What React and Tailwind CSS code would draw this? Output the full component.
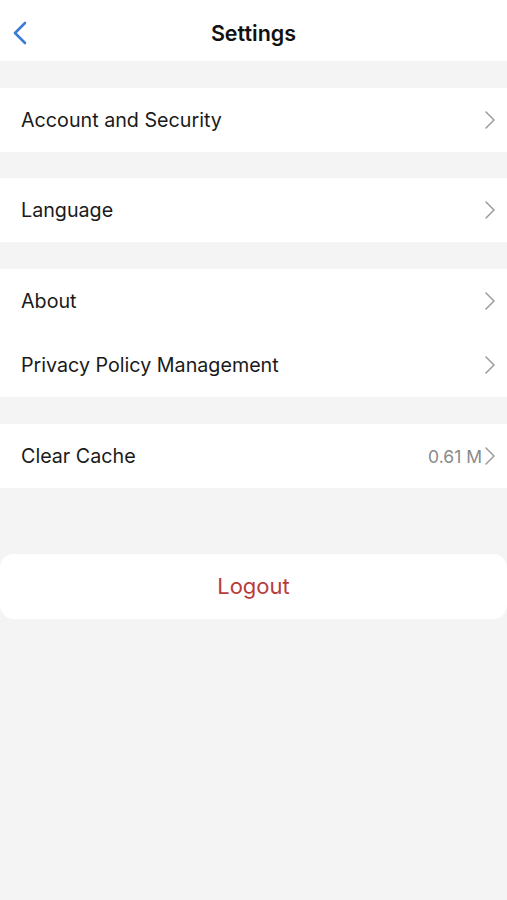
import React from "react";

function Chevron() {
  return (
    <svg width="12" height="20" viewBox="0 0 12 20" className="shrink-0">
      <path d="M2 2 L10 10 L2 18" fill="none" stroke="#9a9a9a" strokeWidth="1.5" strokeLinecap="round" strokeLinejoin="round" />
    </svg>
  );
}

function Row({ label, value }) {
  return (
    <div className="flex h-16 items-center justify-between bg-white pl-[21px] pr-[11px]">
      <span className="pt-[2px] text-[19.7px] text-[#1a1a1a]">{label}</span>
      <div className="flex items-center gap-[2px]">
        {value && <span className="pt-[2px] text-[17.5px] text-[#8a8a8a]">{value}</span>}
        <Chevron />
      </div>
    </div>
  );
}

export default function App() {
  return (
    <div
      className="flex min-h-[900px] w-[507px] flex-col bg-[#f4f4f4]"
      style={{ fontFamily: 'Inter, "Liberation Sans", Arial, sans-serif' }}
    >
      <div className="relative flex h-[61px] items-center justify-center bg-white">
        <svg width="16" height="26" viewBox="0 0 16 26" className="absolute left-[12px] top-[21px]">
          <path d="M13 2 L3 12 L13 22" fill="none" stroke="#3a7bd5" strokeWidth="2.6" strokeLinecap="round" strokeLinejoin="round" />
        </svg>
        <span className="pt-[5px] text-[21.5px] font-semibold text-[#111]">Settings</span>
      </div>
      <div className="mt-[27px] flex flex-col">
        <Row label="Account and Security" />
      </div>
      <div className="mt-[26px] flex flex-col">
        <Row label="Language" />
      </div>
      <div className="mt-[27px] flex flex-col">
        <Row label="About" />
        <Row label="Privacy Policy Management" />
      </div>
      <div className="mt-[27px] flex flex-col">
        <Row label="Clear Cache" value="0.61 M" />
      </div>
      <button className="mt-[66px] flex h-[65px] items-center justify-center rounded-[14px] bg-white text-[22px] text-[#b83c3c]">
        Logout
      </button>
    </div>
  );
}
